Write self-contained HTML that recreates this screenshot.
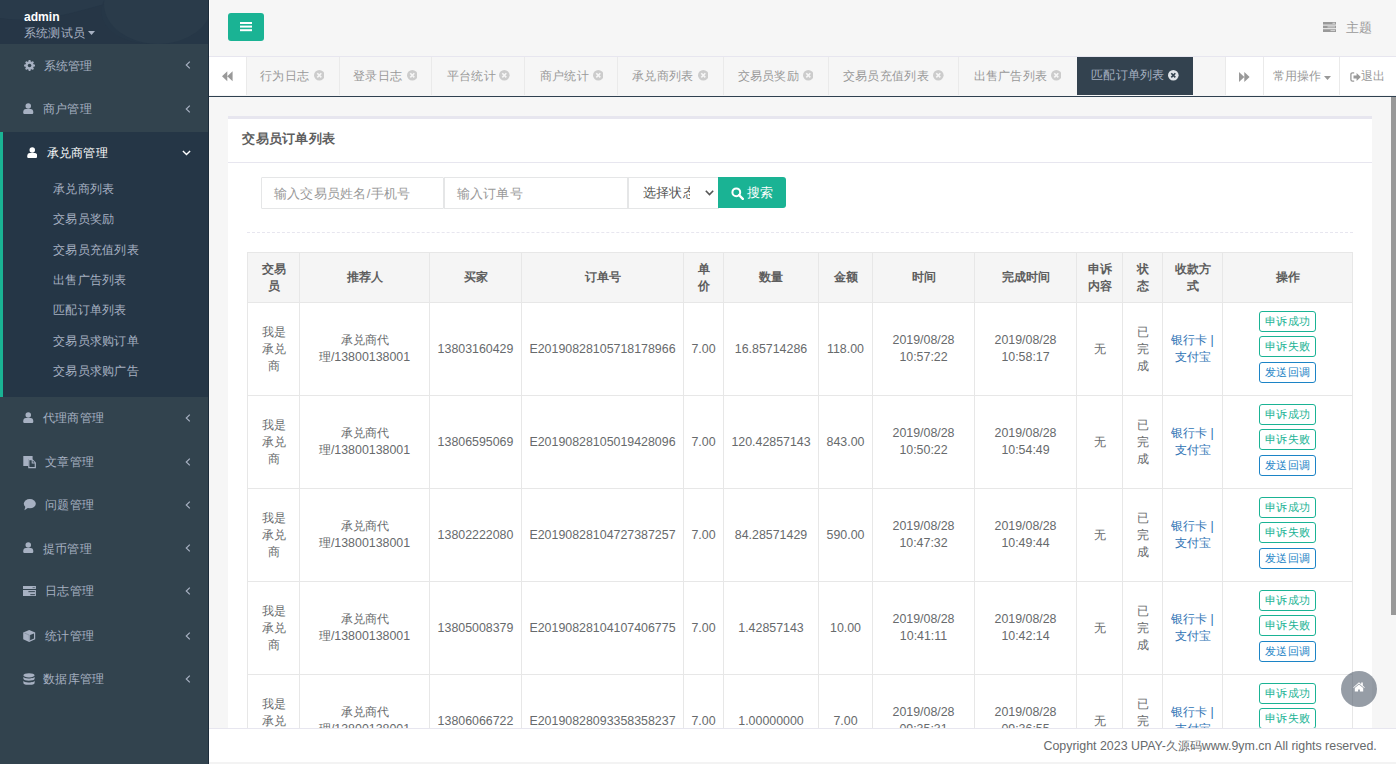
<!DOCTYPE html>
<html><head><meta charset="utf-8"><title>admin</title>
<style>
*{box-sizing:border-box;margin:0;padding:0}
html,body{width:1396px;height:764px;overflow:hidden}
body{position:relative;background:#f6f6f6;font-family:"Liberation Sans",sans-serif;font-size:12.4px;color:#676a6c}
.abs{position:absolute}
svg{display:block;position:absolute}
#side{position:absolute;left:0;top:0;width:209px;height:764px;background:#32434e;border-right:1px solid #1d2c3a;overflow:hidden}
#uhead{position:absolute;left:0;top:0;width:208px;height:44px;background:#263747;overflow:hidden}
.mi{position:absolute;left:0;width:208px;height:44px;color:#a7b1c2;font-size:12.4px;letter-spacing:.25px}
.mi .t{position:absolute;top:0;line-height:16px;white-space:nowrap}
#act{position:absolute;left:0;top:132px;width:208px;height:265px;background:#253646}
#actbar{position:absolute;left:0;top:132px;width:3px;height:265px;background:#1ab394}
.sub{position:absolute;left:53px;color:#a7b1c2;font-size:12.4px;letter-spacing:.25px;line-height:16px;white-space:nowrap}
#topbar{position:absolute;left:209px;top:0;width:1187px;height:56px;background:#f6f6f6;border-left:1px solid #fff}
#menubtn{position:absolute;left:228px;top:13px;width:36px;height:28px;background:#1ab394;border-radius:3px}
#tabs{position:absolute;left:209px;top:56px;width:1187px;height:40px;background:#f6f6f6;border-top:1px solid #e7e6ef}
.tab{position:absolute;top:0;height:38px;color:#999;font-size:12.4px;white-space:nowrap}
.tab .tt{position:absolute;top:11px;line-height:16px}
.tab .br{position:absolute;top:0;width:1px;height:38px;background:#eaeaea}
.rb{position:absolute;top:0;height:38px;background:#fff}
#tabline{position:absolute;left:209px;top:96px;width:1187px;height:1px;background:#2f4050}
#box{position:absolute;left:228px;top:116px;width:1144px;height:650px;background:#fff;border-top:3px solid #e7e6ef}
#scroll{position:absolute;left:1391px;top:97px;width:5px;height:518px;background:#999}
#footer{position:absolute;left:209px;top:728px;width:1187px;height:36px;background:#fff;border-top:1px solid #e7e6ef;border-bottom:2px solid #f3f3f3}
.tl{position:absolute;background:#e7e7e7}
.c{position:absolute;text-align:center;line-height:17px;font-size:12.4px;color:#676a6c;white-space:nowrap}
.h{font-weight:bold;color:#5e5e5e}
.b{position:absolute;width:57px;height:21px;border:1px solid #1ab394;border-radius:3px;color:#1ab394;font-size:11px;line-height:19px;letter-spacing:.2px;text-indent:.2px;text-align:center;white-space:nowrap;background:#fff}
.b.bl{border-color:#1c84c6;color:#1c84c6}
.lk{color:#2f74b5}
</style></head><body>
<div id="side">
<div id="uhead"><svg style="left:0;top:0" width="208" height="44"><path d="M0 0 H120 C80 10 40 25 0 18 Z" fill="#293a4a"/><path d="M0 18 C40 25 80 12 118 0 L104 0 C95 20 110 42 150 44 H0 Z" fill="#263646"/><ellipse cx="158" cy="4" rx="54" ry="40" fill="#2a3b4a"/></svg><div class="abs" style="left:24px;top:8.5px;color:#fff;font-weight:bold;font-size:12.1px;line-height:16px">admin</div><div class="abs" style="left:24px;top:24.7px;color:#a7b1c2;font-size:12.4px;letter-spacing:.2px;line-height:16px;white-space:nowrap">系统测试员</div><svg style="left:88px;top:31px" width="7" height="4" viewBox="0 0 7 4"><path d="M0 0 H7 L3.5 4 Z" fill="#a7b1c2"/></svg></div>
<div id="act"></div><div id="actbar"></div>
<div class="mi" style="top:0;height:0"><div class="t" style="left:43.5px;top:57.6px">系统管理</div><svg style="left:23.9px;top:60.1px" width="11.1" height="11.1" viewBox="0 0 11.1 11.1"><rect x="4.6" y="0.1" width="1.9" height="10.9" rx=".3" transform="rotate(0 5.55 5.55)" fill="#a7b1c2"/><rect x="4.6" y="0.1" width="1.9" height="10.9" rx=".3" transform="rotate(45 5.55 5.55)" fill="#a7b1c2"/><rect x="4.6" y="0.1" width="1.9" height="10.9" rx=".3" transform="rotate(90 5.55 5.55)" fill="#a7b1c2"/><rect x="4.6" y="0.1" width="1.9" height="10.9" rx=".3" transform="rotate(135 5.55 5.55)" fill="#a7b1c2"/><circle cx="5.55" cy="5.55" r="4.3" fill="#a7b1c2"/><circle cx="5.55" cy="5.55" r="1.8" fill="#32434e"/></svg><svg style="left:185px;top:61.3px" width="6" height="8" viewBox="0 0 6 8"><path d="M4.8 0.6 L1.3 4 L4.8 7.4" fill="none" stroke="#a7b1c2" stroke-width="1.2"/></svg></div>
<div class="mi" style="top:0;height:0"><div class="t" style="left:42.9px;top:101.4px">商户管理</div><svg style="left:23px;top:103.1px" width="10.5" height="11" viewBox="0 0 10.5 11"><circle cx="5.25" cy="2.9" r="2.75" fill="#a7b1c2"/><path d="M0.2 9.4 C0.2 6.9 1.3 5.9 2.9 5.9 L7.6 5.9 C9.2 5.9 10.3 6.9 10.3 9.4 C10.3 10.4 9.7 10.9 8.8 10.9 L1.7 10.9 C0.8 10.9 0.2 10.4 0.2 9.4 Z" fill="#a7b1c2"/></svg><svg style="left:185px;top:105.1px" width="6" height="8" viewBox="0 0 6 8"><path d="M4.8 0.6 L1.3 4 L4.8 7.4" fill="none" stroke="#a7b1c2" stroke-width="1.2"/></svg></div>
<div class="mi" style="top:0;height:0"><div class="t" style="left:42.9px;top:409.8px">代理商管理</div><svg style="left:23px;top:411.5px" width="10.5" height="11" viewBox="0 0 10.5 11"><circle cx="5.25" cy="2.9" r="2.75" fill="#a7b1c2"/><path d="M0.2 9.4 C0.2 6.9 1.3 5.9 2.9 5.9 L7.6 5.9 C9.2 5.9 10.3 6.9 10.3 9.4 C10.3 10.4 9.7 10.9 8.8 10.9 L1.7 10.9 C0.8 10.9 0.2 10.4 0.2 9.4 Z" fill="#a7b1c2"/></svg><svg style="left:185px;top:413.5px" width="6" height="8" viewBox="0 0 6 8"><path d="M4.8 0.6 L1.3 4 L4.8 7.4" fill="none" stroke="#a7b1c2" stroke-width="1.2"/></svg></div>
<div class="mi" style="top:0;height:0"><div class="t" style="left:45px;top:454.0px">文章管理</div><svg style="left:23.4px;top:455.8px" width="13" height="13" viewBox="0 0 13 13"><path d="M0.3 0 H9.6 V3 H5.2 V10.1 H0.3 Z" fill="#a7b1c2"/><path d="M5.2 3 H9.4 L12.9 6.5 V12.2 H5.2 Z" fill="#a7b1c2"/><path d="M6.4 4.2 H8.7 V7.6 H11.7 V11 H6.4 Z" fill="#32434e"/><path d="M9.7 4.5 L11.6 6.4 H9.7 Z" fill="#32434e"/></svg><svg style="left:185px;top:457.7px" width="6" height="8" viewBox="0 0 6 8"><path d="M4.8 0.6 L1.3 4 L4.8 7.4" fill="none" stroke="#a7b1c2" stroke-width="1.2"/></svg></div>
<div class="mi" style="top:0;height:0"><div class="t" style="left:45px;top:497.0px">问题管理</div><svg style="left:23.2px;top:499.2px" width="13" height="11.5" viewBox="0 0 13 11.5"><ellipse cx="6.8" cy="4.7" rx="6" ry="4.6" fill="#a7b1c2"/><path d="M1.4 11.2 L2.6 7 L5.6 8.6 Z" fill="#a7b1c2"/></svg><svg style="left:185px;top:500.7px" width="6" height="8" viewBox="0 0 6 8"><path d="M4.8 0.6 L1.3 4 L4.8 7.4" fill="none" stroke="#a7b1c2" stroke-width="1.2"/></svg></div>
<div class="mi" style="top:0;height:0"><div class="t" style="left:42.9px;top:540.6px">提币管理</div><svg style="left:23px;top:542.3px" width="10.5" height="11" viewBox="0 0 10.5 11"><circle cx="5.25" cy="2.9" r="2.75" fill="#a7b1c2"/><path d="M0.2 9.4 C0.2 6.9 1.3 5.9 2.9 5.9 L7.6 5.9 C9.2 5.9 10.3 6.9 10.3 9.4 C10.3 10.4 9.7 10.9 8.8 10.9 L1.7 10.9 C0.8 10.9 0.2 10.4 0.2 9.4 Z" fill="#a7b1c2"/></svg><svg style="left:185px;top:544.3px" width="6" height="8" viewBox="0 0 6 8"><path d="M4.8 0.6 L1.3 4 L4.8 7.4" fill="none" stroke="#a7b1c2" stroke-width="1.2"/></svg></div>
<div class="mi" style="top:0;height:0"><div class="t" style="left:45px;top:583.0px">日志管理</div><svg style="left:23.1px;top:585.9px" width="13" height="10.2" viewBox="0 0 13 10.2"><rect x="0" y="0" width="12.9" height="3" fill="#a7b1c2"/><rect x="0" y="4" width="12.9" height="6.1" fill="#a7b1c2"/><rect x="9.6" y="1" width="2.3" height="1.1" fill="#32434e" opacity=".55"/><rect x="5.4" y="5" width="6.5" height="1.2" fill="#32434e" opacity=".85"/><rect x="7.3" y="8" width="4.6" height="1.2" fill="#32434e" opacity=".85"/></svg><svg style="left:185px;top:586.7px" width="6" height="8" viewBox="0 0 6 8"><path d="M4.8 0.6 L1.3 4 L4.8 7.4" fill="none" stroke="#a7b1c2" stroke-width="1.2"/></svg></div>
<div class="mi" style="top:0;height:0"><div class="t" style="left:45px;top:628.0px">统计管理</div><svg style="left:23.2px;top:630.0px" width="12.4" height="12" viewBox="0 0 12.4 12"><path d="M6.2 0 L12.2 2.4 V9.2 L6.2 11.9 L0.2 9.2 V2.4 Z" fill="#a7b1c2"/><path d="M7.1 5.1 L11 3.5 V8.5 L7.1 10.3 Z" fill="#32434e"/><path d="M1.4 3 L6.2 5 L6.4 10.8" stroke="#32434e" stroke-width=".5" fill="none" opacity=".5"/></svg><svg style="left:185px;top:631.7px" width="6" height="8" viewBox="0 0 6 8"><path d="M4.8 0.6 L1.3 4 L4.8 7.4" fill="none" stroke="#a7b1c2" stroke-width="1.2"/></svg></div>
<div class="mi" style="top:0;height:0"><div class="t" style="left:43px;top:671.4px">数据库管理</div><svg style="left:23.2px;top:672.9px" width="12" height="13" viewBox="0 0 12 13"><ellipse cx="6" cy="2.3" rx="5.6" ry="2.1" fill="#a7b1c2"/><path d="M0.4 3.6 C0.4 6.2 11.6 6.2 11.6 3.6 V5.8 C11.6 8.3 0.4 8.3 0.4 5.8 Z" fill="#a7b1c2"/><path d="M0.4 7.6 C0.4 10.2 11.6 10.2 11.6 7.6 V9.9 C11.6 12.5 0.4 12.5 0.4 9.9 Z" fill="#a7b1c2"/></svg><svg style="left:185px;top:675.1px" width="6" height="8" viewBox="0 0 6 8"><path d="M4.8 0.6 L1.3 4 L4.8 7.4" fill="none" stroke="#a7b1c2" stroke-width="1.2"/></svg></div>
<div class="mi" style="top:0;height:0;color:#fff"><div class="t" style="left:46.5px;top:144.8px">承兑商管理</div><svg style="left:26.8px;top:146.8px" width="10.5" height="11" viewBox="0 0 10.5 11"><circle cx="5.25" cy="2.9" r="2.75" fill="#fff"/><path d="M0.2 9.4 C0.2 6.9 1.3 5.9 2.9 5.9 L7.6 5.9 C9.2 5.9 10.3 6.9 10.3 9.4 C10.3 10.4 9.7 10.9 8.8 10.9 L1.7 10.9 C0.8 10.9 0.2 10.4 0.2 9.4 Z" fill="#fff"/></svg><svg style="left:181.5px;top:150px" width="9" height="6" viewBox="0 0 9 6"><path d="M0.9 0.9 L4.5 4.5 L8.1 0.9" fill="none" stroke="#fff" stroke-width="1.4"/></svg></div>
<div class="sub" style="top:181.1px">承兑商列表</div>
<div class="sub" style="top:211.4px">交易员奖励</div>
<div class="sub" style="top:241.7px">交易员充值列表</div>
<div class="sub" style="top:272.0px">出售广告列表</div>
<div class="sub" style="top:302.3px">匹配订单列表</div>
<div class="sub" style="top:332.6px">交易员求购订单</div>
<div class="sub" style="top:362.9px">交易员求购广告</div>
</div>
<div id="topbar"></div>
<div id="menubtn"><svg style="left:12px;top:8px" width="12" height="11" viewBox="0 0 12 11"><rect x="0" y="1" width="12" height="2" fill="#fff"/><rect x="0" y="4.6" width="12" height="2" fill="#fff"/><rect x="0" y="8.2" width="12" height="2" fill="#fff"/></svg></div>
<svg style="left:1323px;top:22px" width="13" height="10" viewBox="0 0 13 10"><rect x="0" y="0" width="13" height="2.6" fill="#999"/><rect x="0" y="3.6" width="13" height="2.6" fill="#999"/><rect x="0" y="7.2" width="13" height="2.8" fill="#999"/><rect x="9.5" y="0.7" width="2.6" height="1.2" fill="#f6f6f6" opacity=".6"/><rect x="4.5" y="4.3" width="7.6" height="1.2" fill="#f6f6f6" opacity=".6"/><rect x="7.5" y="7.9" width="4.6" height="1.2" fill="#f6f6f6" opacity=".6"/></svg><div class="abs" style="left:1346px;top:19.6px;color:#999;font-size:13px;line-height:16px">主题</div>
<div id="tabs"></div>
<div id="tabline"></div>
<div class="rb" style="left:209px;top:57px;width:37px"></div><div class="abs" style="left:246px;top:57px;width:1px;height:38px;background:#eaeaea"></div><svg style="left:222px;top:71.2px" width="11" height="10.6" viewBox="0 0 11 10"><path d="M5.3 0 V10 L0 5 Z M10.6 0 V10 L5.3 5 Z" fill="#999"/></svg>
<div class="abs" style="left:260.2px;top:67.8px;color:#999;font-size:12.4px;letter-spacing:.3px;line-height:16px;white-space:nowrap">行为日志</div><svg style="left:313.9px;top:70.2px" width="10.6" height="10.6" viewBox="0 0 11 11"><circle cx="5.5" cy="5.5" r="5.5" fill="#ccc"/><path d="M3.4 3.4 L7.6 7.6 M7.6 3.4 L3.4 7.6" stroke="#f6f6f6" stroke-width="1.7"/></svg><div class="abs" style="left:339px;top:57px;width:1px;height:38px;background:#eaeaea"></div>
<div class="abs" style="left:353.2px;top:67.8px;color:#999;font-size:12.4px;letter-spacing:.3px;line-height:16px;white-space:nowrap">登录日志</div><svg style="left:406.7px;top:70.2px" width="10.6" height="10.6" viewBox="0 0 11 11"><circle cx="5.5" cy="5.5" r="5.5" fill="#ccc"/><path d="M3.4 3.4 L7.6 7.6 M7.6 3.4 L3.4 7.6" stroke="#f6f6f6" stroke-width="1.7"/></svg><div class="abs" style="left:431px;top:57px;width:1px;height:38px;background:#eaeaea"></div>
<div class="abs" style="left:446.7px;top:67.8px;color:#999;font-size:12.4px;letter-spacing:.3px;line-height:16px;white-space:nowrap">平台统计</div><svg style="left:499.1px;top:70.2px" width="10.6" height="10.6" viewBox="0 0 11 11"><circle cx="5.5" cy="5.5" r="5.5" fill="#ccc"/><path d="M3.4 3.4 L7.6 7.6 M7.6 3.4 L3.4 7.6" stroke="#f6f6f6" stroke-width="1.7"/></svg><div class="abs" style="left:524px;top:57px;width:1px;height:38px;background:#eaeaea"></div>
<div class="abs" style="left:539.8px;top:67.8px;color:#999;font-size:12.4px;letter-spacing:.3px;line-height:16px;white-space:nowrap">商户统计</div><svg style="left:592.6px;top:70.2px" width="10.6" height="10.6" viewBox="0 0 11 11"><circle cx="5.5" cy="5.5" r="5.5" fill="#ccc"/><path d="M3.4 3.4 L7.6 7.6 M7.6 3.4 L3.4 7.6" stroke="#f6f6f6" stroke-width="1.7"/></svg><div class="abs" style="left:617px;top:57px;width:1px;height:38px;background:#eaeaea"></div>
<div class="abs" style="left:632.2px;top:67.8px;color:#999;font-size:12.4px;letter-spacing:.3px;line-height:16px;white-space:nowrap">承兑商列表</div><svg style="left:697.7px;top:70.2px" width="10.6" height="10.6" viewBox="0 0 11 11"><circle cx="5.5" cy="5.5" r="5.5" fill="#ccc"/><path d="M3.4 3.4 L7.6 7.6 M7.6 3.4 L3.4 7.6" stroke="#f6f6f6" stroke-width="1.7"/></svg><div class="abs" style="left:723px;top:57px;width:1px;height:38px;background:#eaeaea"></div>
<div class="abs" style="left:737.5px;top:67.8px;color:#999;font-size:12.4px;letter-spacing:.3px;line-height:16px;white-space:nowrap">交易员奖励</div><svg style="left:802.8px;top:70.2px" width="10.6" height="10.6" viewBox="0 0 11 11"><circle cx="5.5" cy="5.5" r="5.5" fill="#ccc"/><path d="M3.4 3.4 L7.6 7.6 M7.6 3.4 L3.4 7.6" stroke="#f6f6f6" stroke-width="1.7"/></svg><div class="abs" style="left:828px;top:57px;width:1px;height:38px;background:#eaeaea"></div>
<div class="abs" style="left:842.8px;top:67.8px;color:#999;font-size:12.4px;letter-spacing:.3px;line-height:16px;white-space:nowrap">交易员充值列表</div><svg style="left:933.3px;top:70.2px" width="10.6" height="10.6" viewBox="0 0 11 11"><circle cx="5.5" cy="5.5" r="5.5" fill="#ccc"/><path d="M3.4 3.4 L7.6 7.6 M7.6 3.4 L3.4 7.6" stroke="#f6f6f6" stroke-width="1.7"/></svg><div class="abs" style="left:958px;top:57px;width:1px;height:38px;background:#eaeaea"></div>
<div class="abs" style="left:973.6px;top:67.8px;color:#999;font-size:12.4px;letter-spacing:.3px;line-height:16px;white-space:nowrap">出售广告列表</div><svg style="left:1050.7px;top:70.2px" width="10.6" height="10.6" viewBox="0 0 11 11"><circle cx="5.5" cy="5.5" r="5.5" fill="#ccc"/><path d="M3.4 3.4 L7.6 7.6 M7.6 3.4 L3.4 7.6" stroke="#f6f6f6" stroke-width="1.7"/></svg><div class="abs" style="left:1077px;top:57px;width:1px;height:38px;background:#eaeaea"></div>
<div class="abs" style="left:1077px;top:57px;width:116px;height:38px;background:#33424f"></div><div class="abs" style="left:1091.3px;top:67.3px;color:#a7b1c2;font-size:12.4px;letter-spacing:.2px;line-height:16px;white-space:nowrap">匹配订单列表</div><svg style="left:1168.2px;top:70.2px" width="10.6" height="10.6" viewBox="0 0 11 11"><circle cx="5.5" cy="5.5" r="5.5" fill="#dfe3e8"/><path d="M3.4 3.4 L7.6 7.6 M7.6 3.4 L3.4 7.6" stroke="#33424f" stroke-width="1.7"/></svg><div class="rb" style="left:1225px;top:57px;width:171px"></div><div class="abs" style="left:1225px;top:57px;width:1px;height:38px;background:#eaeaea"></div><div class="abs" style="left:1263px;top:57px;width:1px;height:38px;background:#eaeaea"></div><div class="abs" style="left:1339px;top:57px;width:1px;height:38px;background:#eaeaea"></div><svg style="left:1238.7px;top:72px" width="11" height="10" viewBox="0 0 11 10"><path d="M0 0 V10 L5.3 5 Z M5.3 0 V10 L10.6 5 Z" fill="#999"/></svg><div class="abs" style="left:1273px;top:68.3px;color:#999;font-size:12.4px;letter-spacing:.15px;line-height:16px;white-space:nowrap">常用操作</div><svg style="left:1324.4px;top:75.5px" width="7" height="4" viewBox="0 0 7 4"><path d="M0 0 H7 L3.5 4 Z" fill="#999"/></svg><svg style="left:1350px;top:71.5px" width="11" height="10" viewBox="0 0 11 10"><path d="M4.2 0.9 H2.6 Q0.9 0.9 0.9 2.6 V7.4 Q0.9 9.1 2.6 9.1 H4.2" fill="none" stroke="#999" stroke-width="1.3"/><path d="M3.5 3.6 H6.6 V1 L10.8 5 L6.6 9 V6.4 H3.5 Z" fill="#999"/></svg><div class="abs" style="left:1360.5px;top:68.3px;color:#999;font-size:12.4px;letter-spacing:.3px;line-height:16px;white-space:nowrap">退出</div>
<div id="box"></div>
<div class="abs" style="left:242.4px;top:131.4px;color:#5e5e5e;font-weight:bold;font-size:13px;letter-spacing:.25px;line-height:16px;white-space:nowrap">交易员订单列表</div><div class="abs" style="left:228px;top:162px;width:1144px;height:1px;background:#e7e6ef"></div>
<div class="abs" style="left:261px;top:177px;width:183px;height:32px;border:1px solid #e5e6e7;border-radius:1px;background:#fff"></div><div class="abs" style="left:273.7px;top:185.5px;color:#999;font-size:13px;letter-spacing:.3px;line-height:16px;white-space:nowrap">输入交易员姓名/手机号</div><div class="abs" style="left:444px;top:177px;width:184px;height:32px;border:1px solid #e5e6e7;background:#fff"></div><div class="abs" style="left:456.5px;top:185.5px;color:#999;font-size:13px;letter-spacing:.3px;line-height:16px;white-space:nowrap">输入订单号</div><div class="abs" style="left:628px;top:177px;width:91px;height:32px;border:1px solid #e5e6e7;background:#fff"></div><div class="abs" style="left:643px;top:185px;width:47px;overflow:hidden;color:#555;font-size:13px;letter-spacing:.2px;line-height:16px;white-space:nowrap">选择状态</div><svg style="left:704.5px;top:189.5px" width="9" height="6" viewBox="0 0 9 6"><path d="M0.8 0.8 L4.5 4.6 L8.2 0.8" fill="none" stroke="#555" stroke-width="1.6"/></svg><div class="abs" style="left:718px;top:177px;width:68px;height:31px;background:#1ab394;border-radius:0 3px 3px 0"></div><svg style="left:730.5px;top:186.5px" width="13" height="13" viewBox="0 0 13 13"><circle cx="5.3" cy="5.3" r="3.9" fill="none" stroke="#fff" stroke-width="2"/><path d="M8 8 L11.8 11.8" stroke="#fff" stroke-width="2.4" stroke-linecap="round"/></svg><div class="abs" style="left:746.5px;top:184.5px;color:#fff;font-size:13px;line-height:16px;white-space:nowrap">搜索</div>
<div class="abs" style="left:247px;top:232px;width:1106px;height:0;border-top:1px dashed #e7e6ef"></div>
<div class="abs" style="left:248px;top:253px;width:1104px;height:49px;background:#f5f5f5"></div><div class="tl" style="left:247px;top:252px;width:1px;height:476px"></div><div class="tl" style="left:299px;top:252px;width:1px;height:476px"></div><div class="tl" style="left:429px;top:252px;width:1px;height:476px"></div><div class="tl" style="left:521px;top:252px;width:1px;height:476px"></div><div class="tl" style="left:683px;top:252px;width:1px;height:476px"></div><div class="tl" style="left:723px;top:252px;width:1px;height:476px"></div><div class="tl" style="left:818px;top:252px;width:1px;height:476px"></div><div class="tl" style="left:872px;top:252px;width:1px;height:476px"></div><div class="tl" style="left:974px;top:252px;width:1px;height:476px"></div><div class="tl" style="left:1076px;top:252px;width:1px;height:476px"></div><div class="tl" style="left:1122px;top:252px;width:1px;height:476px"></div><div class="tl" style="left:1162px;top:252px;width:1px;height:476px"></div><div class="tl" style="left:1222px;top:252px;width:1px;height:476px"></div><div class="tl" style="left:1352px;top:252px;width:1px;height:476px"></div><div class="tl" style="left:247px;top:252px;width:1106px;height:1px"></div><div class="tl" style="left:247px;top:302px;width:1106px;height:1px"></div><div class="tl" style="left:247px;top:395px;width:1106px;height:1px"></div><div class="tl" style="left:247px;top:488px;width:1106px;height:1px"></div><div class="tl" style="left:247px;top:581px;width:1106px;height:1px"></div><div class="tl" style="left:247px;top:674px;width:1106px;height:1px"></div>
<div class="c h" style="left:248px;width:51px;top:260.5px;">交易<br>员</div><div class="c h" style="left:300px;width:129px;top:269.0px;">推荐人</div><div class="c h" style="left:430px;width:91px;top:269.0px;">买家</div><div class="c h" style="left:522px;width:161px;top:269.0px;">订单号</div><div class="c h" style="left:684px;width:39px;top:260.5px;">单<br>价</div><div class="c h" style="left:724px;width:94px;top:269.0px;">数量</div><div class="c h" style="left:819px;width:53px;top:269.0px;">金额</div><div class="c h" style="left:873px;width:101px;top:269.0px;">时间</div><div class="c h" style="left:975px;width:101px;top:269.0px;">完成时间</div><div class="c h" style="left:1077px;width:45px;top:260.5px;">申诉<br>内容</div><div class="c h" style="left:1123px;width:39px;top:260.5px;">状<br>态</div><div class="c h" style="left:1163px;width:59px;top:260.5px;">收款方<br>式</div><div class="c h" style="left:1223px;width:129px;top:269.0px;">操作</div>
<div class="c" style="left:248px;width:51px;top:323.5px;">我是<br>承兑<br>商</div><div class="c" style="left:300px;width:129px;top:332.0px;">承兑商代<br>理/13800138001</div><div class="c" style="left:430px;width:91px;top:340.5px;">13803160429</div><div class="c" style="left:522px;width:161px;top:340.5px;">E20190828105718178966</div><div class="c" style="left:684px;width:39px;top:340.5px;">7.00</div><div class="c" style="left:724px;width:94px;top:340.5px;">16.85714286</div><div class="c" style="left:819px;width:53px;top:340.5px;">118.00</div><div class="c" style="left:873px;width:101px;top:332.0px;">2019/08/28<br>10:57:22</div><div class="c" style="left:975px;width:101px;top:332.0px;">2019/08/28<br>10:58:17</div><div class="c" style="left:1077px;width:45px;top:340.5px;">无</div><div class="c" style="left:1123px;width:39px;top:323.5px;">已<br>完<br>成</div><div class="c lk" style="left:1163px;width:59px;top:332.0px;">银行卡 |<br>支付宝</div><div class="b" style="left:1259px;top:311px">申诉成功</div><div class="b" style="left:1259px;top:336.3px">申诉失败</div><div class="b bl" style="left:1259px;top:362.0px">发送回调</div>
<div class="c" style="left:248px;width:51px;top:416.5px;">我是<br>承兑<br>商</div><div class="c" style="left:300px;width:129px;top:425.0px;">承兑商代<br>理/13800138001</div><div class="c" style="left:430px;width:91px;top:433.5px;">13806595069</div><div class="c" style="left:522px;width:161px;top:433.5px;">E20190828105019428096</div><div class="c" style="left:684px;width:39px;top:433.5px;">7.00</div><div class="c" style="left:724px;width:94px;top:433.5px;">120.42857143</div><div class="c" style="left:819px;width:53px;top:433.5px;">843.00</div><div class="c" style="left:873px;width:101px;top:425.0px;">2019/08/28<br>10:50:22</div><div class="c" style="left:975px;width:101px;top:425.0px;">2019/08/28<br>10:54:49</div><div class="c" style="left:1077px;width:45px;top:433.5px;">无</div><div class="c" style="left:1123px;width:39px;top:416.5px;">已<br>完<br>成</div><div class="c lk" style="left:1163px;width:59px;top:425.0px;">银行卡 |<br>支付宝</div><div class="b" style="left:1259px;top:404px">申诉成功</div><div class="b" style="left:1259px;top:429.3px">申诉失败</div><div class="b bl" style="left:1259px;top:455.0px">发送回调</div>
<div class="c" style="left:248px;width:51px;top:509.5px;">我是<br>承兑<br>商</div><div class="c" style="left:300px;width:129px;top:518.0px;">承兑商代<br>理/13800138001</div><div class="c" style="left:430px;width:91px;top:526.5px;">13802222080</div><div class="c" style="left:522px;width:161px;top:526.5px;">E20190828104727387257</div><div class="c" style="left:684px;width:39px;top:526.5px;">7.00</div><div class="c" style="left:724px;width:94px;top:526.5px;">84.28571429</div><div class="c" style="left:819px;width:53px;top:526.5px;">590.00</div><div class="c" style="left:873px;width:101px;top:518.0px;">2019/08/28<br>10:47:32</div><div class="c" style="left:975px;width:101px;top:518.0px;">2019/08/28<br>10:49:44</div><div class="c" style="left:1077px;width:45px;top:526.5px;">无</div><div class="c" style="left:1123px;width:39px;top:509.5px;">已<br>完<br>成</div><div class="c lk" style="left:1163px;width:59px;top:518.0px;">银行卡 |<br>支付宝</div><div class="b" style="left:1259px;top:497px">申诉成功</div><div class="b" style="left:1259px;top:522.3px">申诉失败</div><div class="b bl" style="left:1259px;top:548.0px">发送回调</div>
<div class="c" style="left:248px;width:51px;top:602.5px;">我是<br>承兑<br>商</div><div class="c" style="left:300px;width:129px;top:611.0px;">承兑商代<br>理/13800138001</div><div class="c" style="left:430px;width:91px;top:619.5px;">13805008379</div><div class="c" style="left:522px;width:161px;top:619.5px;">E20190828104107406775</div><div class="c" style="left:684px;width:39px;top:619.5px;">7.00</div><div class="c" style="left:724px;width:94px;top:619.5px;">1.42857143</div><div class="c" style="left:819px;width:53px;top:619.5px;">10.00</div><div class="c" style="left:873px;width:101px;top:611.0px;">2019/08/28<br>10:41:11</div><div class="c" style="left:975px;width:101px;top:611.0px;">2019/08/28<br>10:42:14</div><div class="c" style="left:1077px;width:45px;top:619.5px;">无</div><div class="c" style="left:1123px;width:39px;top:602.5px;">已<br>完<br>成</div><div class="c lk" style="left:1163px;width:59px;top:611.0px;">银行卡 |<br>支付宝</div><div class="b" style="left:1259px;top:590px">申诉成功</div><div class="b" style="left:1259px;top:615.3px">申诉失败</div><div class="b bl" style="left:1259px;top:641.0px">发送回调</div>
<div class="c" style="left:248px;width:51px;top:695.5px;">我是<br>承兑<br>商</div><div class="c" style="left:300px;width:129px;top:704.0px;">承兑商代<br>理/13800138001</div><div class="c" style="left:430px;width:91px;top:712.5px;">13806066722</div><div class="c" style="left:522px;width:161px;top:712.5px;">E20190828093358358237</div><div class="c" style="left:684px;width:39px;top:712.5px;">7.00</div><div class="c" style="left:724px;width:94px;top:712.5px;">1.00000000</div><div class="c" style="left:819px;width:53px;top:712.5px;">7.00</div><div class="c" style="left:873px;width:101px;top:704.0px;">2019/08/28<br>09:35:31</div><div class="c" style="left:975px;width:101px;top:704.0px;">2019/08/28<br>09:36:55</div><div class="c" style="left:1077px;width:45px;top:712.5px;">无</div><div class="c" style="left:1123px;width:39px;top:695.5px;">已<br>完<br>成</div><div class="c lk" style="left:1163px;width:59px;top:704.0px;">银行卡 |<br>支付宝</div><div class="b" style="left:1259px;top:683px">申诉成功</div><div class="b" style="left:1259px;top:708.3px">申诉失败</div><div class="b bl" style="left:1259px;top:734.0px">发送回调</div>
<div id="scroll"></div>
<div id="footer"></div>
<div class="abs" style="left:1043.5px;top:737.5px;color:#676a6c;font-size:12.4px;line-height:16px;white-space:nowrap">Copyright 2023 UPAY-久源码www.9ym.cn All rights reserved.</div>
<div class="abs" style="left:1341px;top:671px;width:36px;height:36px;border-radius:50%;background:rgba(80,92,107,.6)"></div><svg style="left:1353px;top:681.5px" width="12" height="10" viewBox="0 0 12 10"><path d="M6 0.3 L8.2 2.2 V0.6 H9.8 V3.6 L11.8 5.4 L11.3 6 L6 1.5 L0.7 6 L0.2 5.4 Z" fill="#fff"/><path d="M6 2.4 L10.2 6 V9.6 H6.9 V7.6 H5.1 V9.6 H1.8 V6 Z" fill="#fff"/></svg>
</body></html>
